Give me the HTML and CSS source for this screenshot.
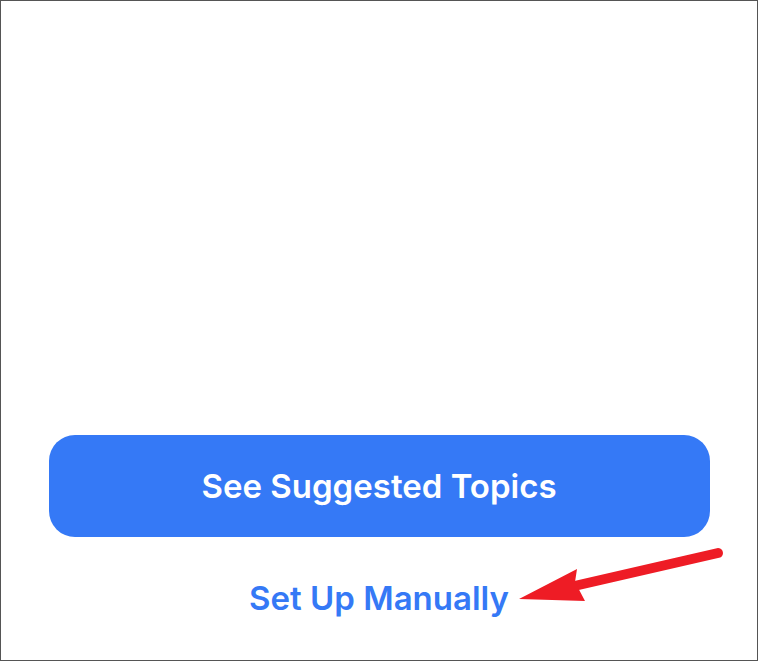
FILE: index.html
```html
<!DOCTYPE html>
<html lang="en">
  <head>
    <meta charset="UTF-8" />
    <meta name="viewport" content="width=device-width, initial-scale=1.0" />
    <title>Topics</title>
    <link rel="stylesheet" href="styles.css">
  </head>
  <body>
    <div class="screen">
      <div class="actions">
        <button type="button" class="primary">See Suggested Topics</button>
        <a href="#" class="manual">Set Up Manually</a>
      </div>
      <svg class="arrow" width="759" height="662" viewBox="0 0 759 662">
        <line x1="718" y1="553" x2="570" y2="587" stroke="#ee1c25" stroke-width="10" stroke-linecap="round" />
        <polygon points="519,599 577,569 575,582 585,601" fill="#ee1c25" />
      </svg>
    </div>
  </body>
</html>
```

FILE: styles.css
```css
* {
  margin: 0;
  padding: 0;
  box-sizing: border-box;
}

body {
  background: #fff;
  font-family: Inter, "Noto Sans", sans-serif;
}

.screen {
  position: relative;
  width: 758px;
  height: 661px;
  border: 1px solid #555;
  background: #fff;
  overflow: hidden;
}

.actions {
  display: flex;
  flex-direction: column;
  align-items: center;
  padding-top: 434px;
}

.primary {
  width: 661px;
  height: 102px;
  border: none;
  border-radius: 26px;
  background: #3579f6;
  color: #fff;
  font-family: Inter, "Noto Sans", sans-serif;
  font-size: 33px;
  font-weight: 600;
  cursor: pointer;
}

.manual {
  margin-top: 41px;
  color: #3579f6;
  font-size: 33px;
  font-weight: 600;
  line-height: 40px;
  text-decoration: none;
}

.arrow {
  position: absolute;
  top: -1px;
  left: -1px;
}
```
